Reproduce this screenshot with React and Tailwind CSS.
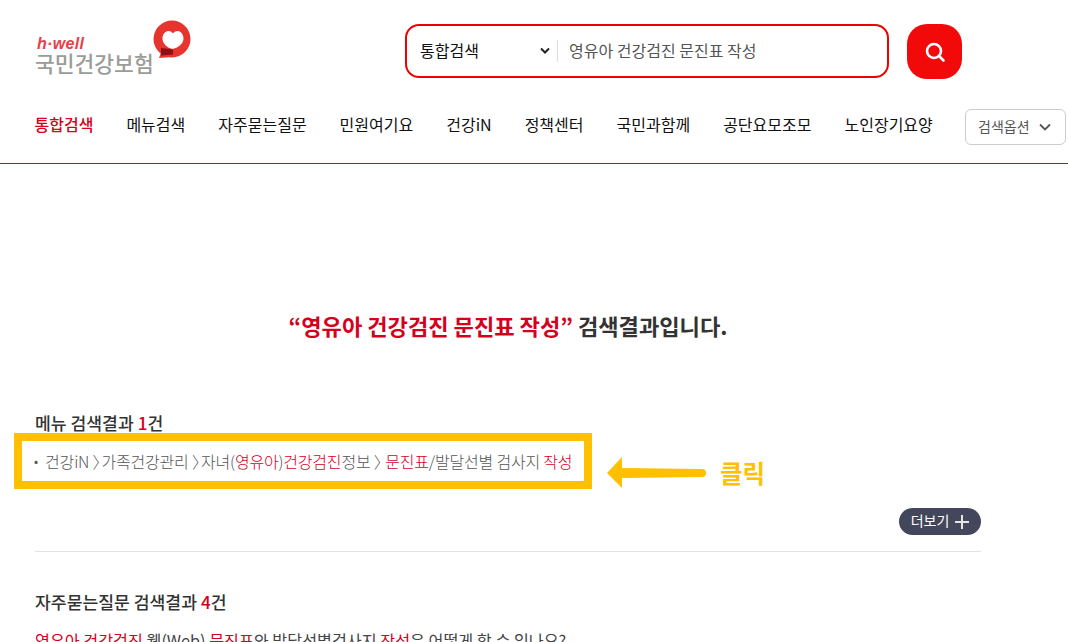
import React from "react";

function R({ children }) {
  return <span className="text-[#d5001c]">{children}</span>;
}

const nav = ["메뉴검색", "자주묻는질문", "민원여기요", "건강iN", "정책센터", "국민과함께", "공단요모조모", "노인장기요양"];

export default function App() {
  return (
    <div className="h-[642px] w-[1068px] overflow-hidden bg-white font-['Noto_Sans_CJK_KR','Noto_Sans',sans-serif] text-[#222]">
      <header className="h-[164px] border-b border-[#e60000]">
        <div className="flex h-[100px] items-start">
          <div className="relative ml-[35px] mt-[20px] h-[60px] w-[160px]">
            <div className="absolute left-[2px] top-[16px] font-['Liberation_Sans',sans-serif] text-[16px] font-bold italic leading-[16px] tracking-[0.3px] text-[#e8404a]">h·well</div>
            <div className="absolute left-0 top-[32px] whitespace-nowrap text-[21.5px] font-medium leading-[21px] text-[#9a9c98]">국민건강보험</div>
            <svg className="absolute left-[117px] top-0" width="40" height="40" viewBox="0 0 40 40">
              <circle cx="20" cy="19" r="18.500" fill="#e8342f" />
              <path d="M7 38l3-8 10 7z" fill="#e8342f" />
              <path d="M20.500 29c-6-1.500-10-5.500-10-10.500 0-4.500 3-7.500 6-7.500 2 0 3.500 1 4.500 2.500 1-1.500 2.500-2.500 4.500-2.500 3 0 6 3 6 7.500 0 5-4.500 9-11 10.500z" fill="#fff" />
              <path d="M9 28l12 1.500v5l-12 1z" fill="#8f0f14" />
            </svg>
          </div>
          <div className="ml-[210px] mt-[24px] flex h-[54px] w-[484px] items-center rounded-[14px] border-2 border-[#ee0000]">
            <span className="mb-[3px] ml-[13px] w-[120px] text-[16px] leading-[24px] text-[#111]">통합검색</span>
            <svg className="mr-[7px]" width="10" height="8" viewBox="0 0 10 8" fill="none" stroke="#222" strokeWidth="2"><path d="M1 1.500l4 4 4-4" /></svg>
            <span className="h-[22px] w-px bg-[#ddd]" />
            <span className="mb-[3px] ml-[11px] text-[16px] leading-[24px] text-[#555]">영유아 건강검진 문진표 작성</span>
          </div>
          <button className="ml-[18px] mt-[24px] flex h-[55px] w-[55px] items-center justify-center rounded-[20px] bg-[#f20a0a]">
            <svg width="24" height="24" viewBox="0 0 24 24" fill="none" stroke="#fff" strokeWidth="2.600" strokeLinecap="round"><circle cx="11" cy="11" r="7" /><path d="M16.500 16.500l4 4" /></svg>
          </button>
        </div>
        <nav className="flex h-[48px] items-center pl-[34.500px] text-[16px] leading-[24px] text-[#111]">
          <span className="mr-[33px] font-medium text-[#d5001c]">통합검색</span>
          {nav.map((n) => (
            <span key={n} className="mr-[33px] whitespace-nowrap">{n}</span>
          ))}
          <button className="-ml-[1px] mt-[6px] flex h-[36px] w-[101px] shrink-0 items-center justify-center gap-[9px] rounded-[6px] border border-[#ccc] text-[14px] text-[#555]">
            <span className="-ml-[2px] mb-[2px]">검색옵션</span>
            <svg width="12" height="8" viewBox="0 0 12 8" fill="none" stroke="#555" strokeWidth="1.800"><path d="M1 1.500l5 5 5-5" /></svg>
          </button>
        </nav>
      </header>

      <main className="px-[35px]">
        <h1 className="mt-[145px] w-[946px] text-center text-[22.100px] font-semibold leading-[32px] text-[#333]">
          <R>“영유아 건강검진 문진표 작성”</R> 검색결과입니다.
        </h1>

        <h2 className="mt-[70px] text-[17.200px] font-medium leading-[24px] text-[#333]">메뉴 검색결과 <R>1</R>건</h2>

        <div className="-ml-[21px] mt-[-2px] flex h-[56px] w-[578px] items-center border-[8px] border-[#ffc000] pl-[12px] text-[16px] font-light leading-[24px] text-[#555]">
          <span className="mr-[7px] text-[12px] font-normal">•</span>
          <span className="whitespace-nowrap tracking-[-0.2px]">
            건강iN <span className="tracking-[-7px]">〉</span>가족건강관리 <span className="tracking-[-7px]">〉</span>자녀(<R>영유아</R>)<R>건강검진</R>정보 <span className="tracking-[-4.500px]">〉</span><R>문진표</R>/발달선별 검사지 <R>작성</R>
          </span>
        </div>

        <div className="relative h-[19px]">
          <svg className="absolute left-[570px] top-[-34px]" width="102" height="36" viewBox="0 0 102 36">
            <path d="M2 18L17 2v11l80 1a4 4 0 0 1 0 8l-80 1v10z" fill="#ffc000" />
          </svg>
          <span className="absolute left-[685px] top-[-34px] text-[24.500px] font-bold leading-[36px] text-[#ffc000]">클릭</span>
        </div>

        <div className="flex w-[946px] justify-end pb-[16px]">
          <button className="flex h-[27px] w-[82px] items-center justify-center gap-[6px] rounded-full bg-[#44475c] text-[14px] text-white">
            <span className="mb-[2px]">더보기</span>
            <svg width="14" height="14" viewBox="0 0 14 14" stroke="#e5e5e5" strokeWidth="2"><path d="M7 0v14M0 7h14" /></svg>
          </button>
        </div>
        <div className="h-px w-[946px] bg-[#e2e2e2]" />

        <h2 className="mt-[38px] text-[17.200px] font-medium leading-[24px] text-[#333]">자주묻는질문 검색결과 <R>4</R>건</h2>
        <p className="mt-[13px] whitespace-nowrap text-[16.200px] leading-[26px] text-[#444]">
          <R>영유아 건강검진</R> 웹(Web) <R>문진표</R>와 발달선별검사지 <R>작성</R>은 어떻게 할 수 있나요?
        </p>
      </main>
    </div>
  );
}
